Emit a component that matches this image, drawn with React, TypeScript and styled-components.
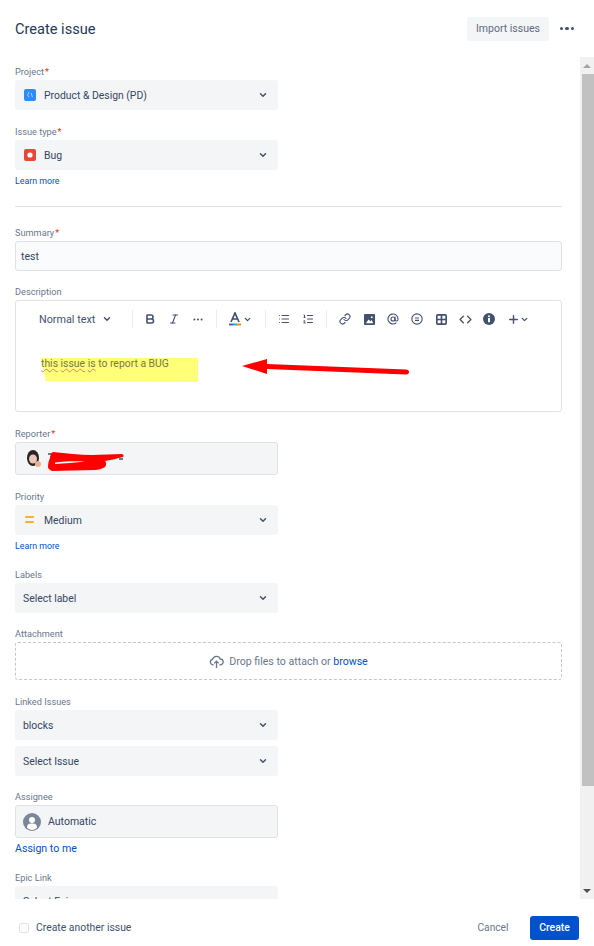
import React from 'react'
import styled, { createGlobalStyle } from 'styled-components'
import { AtSign, Bold, ChevronDown, Code, Italic, Link, List, ListOrdered, Plus } from 'lucide-react'

const Color = {
  text: '#344563',
  subtle: '#5e6c84',
  label: '#6b778c',
  field: '#f4f5f7',
  border: '#dfe1e6',
  link: '#0052cc',
  icon: '#42526e',
}

const GlobalStyle = createGlobalStyle`
  html, body {
    margin: 0;
    height: 100%;
    overflow: hidden;
    background: #fff;
  }
  body {
    font-family: Roboto, "Noto Sans", sans-serif;
    color: ${Color.text};
  }
  * {
    box-sizing: border-box;
  }
`

const PageContainer = styled.div`
  display: flex;
  flex-direction: column;
  width: 594px;
  height: 946px;
`

const Header = styled.header`
  flex: none;
  display: flex;
  align-items: center;
  justify-content: space-between;
  height: 57px;
  padding: 0 20px 0 15px;
`

const Title = styled.h1`
  margin: 0;
  font-size: 14.6px;
  font-weight: 400;
  color: #253858;
`

const HeaderActions = styled.div`
  display: flex;
  align-items: center;
  gap: 11px;
`

const ImportButton = styled.button`
  width: 82px;
  height: 24px;
  padding: 0;
  border: 0;
  border-radius: 2px;
  background: ${Color.field};
  color: ${Color.subtle};
  font: inherit;
  font-size: 10.5px;
`

const MoreDots = styled.span`
  display: flex;
  gap: 2px;
  width: 14px;

  i {
    width: 3.5px;
    height: 3.5px;
    border-radius: 50%;
    background: ${Color.icon};
  }
`

const Body = styled.div`
  flex: 1;
  min-height: 0;
  display: flex;
`

const ScrollArea = styled.main`
  flex: 1;
  min-width: 0;
  overflow: hidden;
  padding: 0 18px 0 15px;
`

const ScrollTrack = styled.div`
  flex: none;
  display: flex;
  flex-direction: column;
  width: 14px;
  background: #f1f1f1;
`

const ScrollButton = styled.span<{ $down?: boolean }>`
  flex: none;
  display: flex;
  align-items: center;
  justify-content: center;
  height: 17px;
  margin-top: ${({ $down }) => ($down ? 'auto' : '0')};

  &::before {
    content: '';
    border-left: 4px solid transparent;
    border-right: 4px solid transparent;
    border-${({ $down }) => ($down ? 'top' : 'bottom')}: 4px solid ${({ $down }) => ($down ? '#505050' : '#a3a3a3')};
  }
`

const ScrollThumb = styled.span`
  flex: none;
  height: 712px;
  margin-left: 2px;
  background: #c1c1c1;
`

const Form = styled.div`
  display: flex;
  flex-direction: column;
  width: 547px;
  padding-top: 8px;
`

const Field = styled.div<{ $top?: number }>`
  margin-top: ${({ $top }) => $top ?? 15}px;
`

const Label = styled.label`
  display: block;
  height: 15px;
  font-size: 9.2px;
  line-height: 14px;
  color: ${Color.label};

  b {
    margin-left: 1px;
    font-weight: 400;
    color: #de350b;
  }
`

const SelectBox = styled.div<{ $gap?: number }>`
  display: flex;
  align-items: center;
  width: 263px;
  height: 30px;
  margin-top: ${({ $gap }) => $gap ?? 0}px;
  padding: 0 10px 0 8px;
  border-radius: 3px;
  background: ${Color.field};
  font-size: 10.4px;
  color: ${Color.text};

  & > svg:last-child {
    margin-left: auto;
  }
`

const SelectIcon = styled.span`
  flex: none;
  display: flex;
  align-items: center;
  justify-content: center;
  width: 12px;
  height: 12px;
  margin: 0 8px 0 1px;
`

const ReadonlyBox = styled.div`
  display: flex;
  align-items: center;
  width: 263px;
  height: 33px;
  padding: 0 7px;
  border: 1px solid ${Color.border};
  border-radius: 3px;
  background: ${Color.field};
  font-size: 10.5px;
`

const HelpLink = styled.a`
  display: block;
  margin-top: 5px;
  font-size: 8.8px;
  line-height: 12px;
  color: ${Color.link};
`

const AssignLink = styled.a`
  display: block;
  margin-top: 4px;
  font-size: 10.6px;
  line-height: 13px;
  color: ${Color.link};
`

const Divider = styled.hr`
  height: 1px;
  margin: 19px 0 0;
  border: 0;
  background: ${Color.border};
`

const TextInput = styled.div`
  display: flex;
  align-items: center;
  height: 30px;
  padding: 0 5px;
  border: 1px solid ${Color.border};
  border-radius: 3px;
  background: #fafbfc;
  font-size: 10.5px;
`

const Editor = styled.div`
  position: relative;
  isolation: isolate;
  height: 112px;
  border: 1px solid ${Color.border};
  border-radius: 3px;
`

const Toolbar = styled.div`
  display: flex;
  align-items: center;
  height: 36px;
  padding-left: 23px;
  color: ${Color.icon};
`

const StyleMenu = styled.span`
  display: flex;
  align-items: center;
  width: 93px;
  font-size: 10.8px;
  gap: 7px;
`

const ToolSeparator = styled.span<{ $before?: number; $after?: number }>`
  flex: none;
  width: 1px;
  height: 18px;
  margin-left: ${({ $before }) => $before ?? 0}px;
  margin-right: ${({ $after }) => $after ?? 5}px;
  background: #ebecf0;
`

const Tool = styled.span<{ $width?: number }>`
  flex: none;
  display: flex;
  align-items: center;
  justify-content: center;
  width: ${({ $width }) => $width ?? 24}px;
  height: 24px;
  color: ${Color.icon};
`

const PlusChevron = styled(ChevronDown)`
  margin-left: -5px;
`

const EditorBody = styled.div`
  padding: 20px 25px 0;
  font-size: 10.4px;
  line-height: 13px;
  color: #77793f;

  u {
    text-decoration: underline wavy #e0805f 0.7px;
    text-underline-offset: 1px;
  }
`

const HighlightMark = styled.span`
  position: absolute;
  left: 25px;
  top: 57px;
  width: 157px;
  height: 24px;
  background: #ffff78;
  clip-path: polygon(0 0, 100% 0, 100% 100%, 3% 96%);
  z-index: -1;
`

const ArrowOverlay = styled.svg`
  position: absolute;
  left: 226px;
  top: 53px;
`

const AvatarSlot = styled.span`
  position: relative;
  display: flex;
  width: 16px;
  height: 18px;
  margin: 1px 7px 0 3px;
`

const ScribbleOverlay = styled.svg`
  position: absolute;
  left: 22px;
  top: 0;
`

const ReadonlyAvatar = styled.span`
  flex: none;
  width: 18px;
  height: 18px;
  margin: 0 7px 0 0;
  color: #7a869a;
`

const DropZone = styled.div`
  display: flex;
  align-items: center;
  justify-content: center;
  gap: 5px;
  height: 38px;
  border: 1px dashed #c1c7d0;
  border-radius: 3px;
  font-size: 10.6px;
  color: ${Color.label};

  a {
    color: ${Color.link};
  }
`

const Footer = styled.footer`
  flex: none;
  display: flex;
  align-items: center;
  height: 47px;
  padding: 10px 15px 0 19px;
`

const CheckBox = styled.span`
  width: 10px;
  height: 10px;
  margin-right: 7px;
  border: 1px solid ${Color.border};
  border-radius: 2px;
  background: #fafbfc;
`

const CheckLabel = styled.span`
  font-size: 10.4px;
  color: ${Color.icon};
`

const CancelButton = styled.button`
  margin-left: auto;
  width: 52px;
  height: 24px;
  padding: 0;
  border: 0;
  background: none;
  color: ${Color.label};
  font: inherit;
  font-size: 10.2px;
`

const CreateButton = styled.button`
  width: 49px;
  height: 24px;
  margin-left: 11px;
  padding: 0;
  border: 0;
  border-radius: 3px;
  background: ${Color.link};
  color: #fff;
  font: inherit;
  font-size: 10.4px;
  font-weight: 500;
`

const Chevron = () => <ChevronDown size={10} strokeWidth={3.5} color={Color.icon} />

const ToolIcon = { size: 12, strokeWidth: 2.2 }

const Required = () => <b>*</b>

const App = () => {
  return (
    <PageContainer>
      <GlobalStyle />
      <Header>
        <Title>Create issue</Title>
        <HeaderActions>
          <ImportButton>Import issues</ImportButton>
          <MoreDots>
            <i />
            <i />
            <i />
          </MoreDots>
        </HeaderActions>
      </Header>
      <Body>
        <ScrollArea>
          <Form>
            <Field $top={0}>
              <Label>
                Project
                <Required />
              </Label>
              <SelectBox>
                <SelectIcon>
                  <svg width="12" height="12" viewBox="0 0 12 12">
                    <rect width="12" height="12" rx="2" fill="#2c8cff" />
                    <path d="M5 3L3.5 6L5 8M7 4L8.5 8" stroke="#a9d0ff" strokeWidth="1" fill="none" />
                  </svg>
                </SelectIcon>
                Product &amp; Design (PD)
                <Chevron />
              </SelectBox>
            </Field>
            <Field>
              <Label>
                Issue type
                <Required />
              </Label>
              <SelectBox>
                <SelectIcon>
                  <svg width="12" height="12" viewBox="0 0 12 12">
                    <rect width="12" height="12" rx="2" fill="#e5493a" />
                    <circle cx="6" cy="6" r="2.6" fill="#fff" />
                  </svg>
                </SelectIcon>
                Bug
                <Chevron />
              </SelectBox>
              <HelpLink>Learn more</HelpLink>
            </Field>
            <Divider />
            <Field $top={19}>
              <Label>
                Summary
                <Required />
              </Label>
              <TextInput>test</TextInput>
            </Field>
            <Field $top={14}>
              <Label>Description</Label>
              <Editor>
                <Toolbar>
                  <StyleMenu>
                    Normal text
                    <ChevronDown size={10} strokeWidth={3.5} />
                  </StyleMenu>
                  <ToolSeparator />
                  <Tool><Bold size={12} strokeWidth={3.2} /></Tool>
                  <Tool><Italic {...ToolIcon} /></Tool>
                  <Tool>
                    <svg width="10" height="3" viewBox="0 0 10 3" fill="currentColor">
                      <circle cx="1.4" cy="1.5" r="1" />
                      <circle cx="5" cy="1.5" r="1" />
                      <circle cx="8.6" cy="1.5" r="1" />
                    </svg>
                  </Tool>
                  <ToolSeparator $before={6} $after={11} />
                  <Tool $width={14}>
                    <svg width="12" height="14" viewBox="0 0 12 14">
                      <path d="M2 10L6 1L10 10M3.5 7H8.5" stroke="#42526e" strokeWidth="1.7" fill="none" />
                      <rect y="11.5" width="4" height="2" fill="#6554c0" />
                      <rect x="4" y="11.5" width="4" height="2" fill="#00b8d9" />
                      <rect x="8" y="11.5" width="4" height="2" fill="#ff8b00" />
                    </svg>
                  </Tool>
                  <Tool $width={10}><ChevronDown size={9} strokeWidth={3.5} /></Tool>
                  <ToolSeparator $before={13} $after={6} />
                  <Tool><List size={12} strokeWidth={2} /></Tool>
                  <Tool><ListOrdered size={12} strokeWidth={2} /></Tool>
                  <ToolSeparator $before={6} $after={6} />
                  <Tool><Link {...ToolIcon} /></Tool>
                  <Tool>
                    <svg width="11" height="11" viewBox="0 0 12 12">
                      <rect width="12" height="12" rx="1" fill="#42526e" />
                      <path d="M2 10L5 6L7 8L8.5 6.5L10 10Z" fill="#fff" />
                      <circle cx="8.5" cy="3.5" r="1" fill="#fff" />
                    </svg>
                  </Tool>
                  <Tool><AtSign {...ToolIcon} /></Tool>
                  <Tool>
                    <svg width="12" height="12" viewBox="0 0 13 13" fill="none" stroke="currentColor" strokeWidth="1.2">
                      <circle cx="6.5" cy="6.5" r="5.6" />
                      <path d="M4.4 5.4H8.6M4.4 8H8.6" />
                    </svg>
                  </Tool>
                  <Tool>
                    <svg width="11" height="11" viewBox="0 0 12 12" fill="none" stroke="currentColor" strokeWidth="1.8">
                      <rect x="0.9" y="0.9" width="10.2" height="10.2" rx="1" />
                      <path d="M6 1V11M1 6H11" />
                    </svg>
                  </Tool>
                  <Tool><Code size={13} strokeWidth={2.4} /></Tool>
                  <Tool>
                    <svg width="12" height="12" viewBox="0 0 12 12">
                      <circle cx="6" cy="6" r="6" fill="#42526e" />
                      <circle cx="6" cy="3.2" r="1" fill="#fff" />
                      <rect x="5" y="5" width="2" height="4.2" fill="#fff" />
                    </svg>
                  </Tool>
                  <Tool><Plus size={13} strokeWidth={2.6} /></Tool>
                  <PlusChevron size={9} strokeWidth={3.5} />
                </Toolbar>
                <EditorBody>
                  <u>this</u> <u>issue</u> <u>is</u> to report a BUG
                </EditorBody>
                <HighlightMark />
                <ArrowOverlay width="170" height="24" viewBox="0 0 170 24">
                  <path d="M0 12L25 5L25 10L164 15.5C168 15.6 168 20.5 164 20.5L25 15L25 20Z" fill="#fe0000" />
                </ArrowOverlay>
              </Editor>
            </Field>
            <Field>
              <Label>
                Reporter
                <Required />
              </Label>
              <ReadonlyBox>
                <AvatarSlot>
                  <svg width="16" height="18" viewBox="0 0 16 18">
                    <ellipse cx="7" cy="8" rx="6" ry="8" fill="#2b2422" />
                    <ellipse cx="7" cy="9" rx="4" ry="4.5" fill="#eac6ba" />
                    <circle cx="12" cy="14" r="3" fill="#e8b28f" />
                  </svg>
                  <ScribbleOverlay width="76" height="21" viewBox="0 0 76 21">
                    <path d="M0 4H4M71 9H75" stroke="#42526e" strokeWidth="1.5" />
                    <path
                      d="M5 2C18 3 32 5 44 5C54 5 64 4 74 4C76 5 76 6 75 7C68 9 62 10 57 11C59 13 58 16 57 17C54 19 50 20 47 20C32 20 18 21 4 21C1 20 0 18 0 17C0 13 1 10 2 8C2 6 3 3 5 2Z"
                      fill="#fe0000"
                    />
                    <path d="M7 12.5C18 11 28 11 37 11.5C28 12.5 16 13.5 7 14Z" fill="#f4f5f7" />
                  </ScribbleOverlay>
                </AvatarSlot>
              </ReadonlyBox>
            </Field>
            <Field>
              <Label>Priority</Label>
              <SelectBox>
                <SelectIcon>
                  <svg width="10" height="8" viewBox="0 0 10 8" fill="#f7ae33">
                    <rect width="9" height="2" rx="1" />
                    <rect y="5" width="9" height="2" rx="1" />
                  </svg>
                </SelectIcon>
                Medium
                <Chevron />
              </SelectBox>
              <HelpLink>Learn more</HelpLink>
            </Field>
            <Field $top={16}>
              <Label>Labels</Label>
              <SelectBox>
                Select label
                <Chevron />
              </SelectBox>
            </Field>
            <Field $top={14}>
              <Label>Attachment</Label>
              <DropZone>
                <svg width="15" height="15" viewBox="0 0 16 16" fill="none" stroke="#6b778c" strokeWidth="1.4">
                  <path d="M5 11.5H4A3 3 0 0 1 3.8 5.6A4.3 4.3 0 0 1 12 5.3A3.1 3.1 0 0 1 12 11.5H11" />
                  <path d="M8 15V8M5.6 10L8 7.6L10.4 10" />
                </svg>
                <span>
                  Drop files to attach or <a>browse</a>
                </span>
              </DropZone>
            </Field>
            <Field>
              <Label>Linked Issues</Label>
              <SelectBox>
                blocks
                <Chevron />
              </SelectBox>
              <SelectBox $gap={6}>
                Select Issue
                <Chevron />
              </SelectBox>
            </Field>
            <Field $top={14}>
              <Label>Assignee</Label>
              <ReadonlyBox>
                <ReadonlyAvatar>
                  <svg width="18" height="18" viewBox="0 0 18 18">
                    <circle cx="9" cy="9" r="9" fill="currentColor" />
                    <circle cx="9" cy="7" r="3" fill="#fff" />
                    <path d="M4 15C4 11 6 10.5 9 10.5C12 10.5 14 11 14 15A8 8 0 0 1 4 15Z" fill="#fff" />
                  </svg>
                </ReadonlyAvatar>
                Automatic
              </ReadonlyBox>
              <AssignLink>Assign to me</AssignLink>
            </Field>
            <Field $top={16}>
              <Label>Epic Link</Label>
              <SelectBox>
                Select Epic
                <Chevron />
              </SelectBox>
            </Field>
          </Form>
        </ScrollArea>
        <ScrollTrack>
          <ScrollButton />
          <ScrollThumb />
          <ScrollButton $down />
        </ScrollTrack>
      </Body>
      <Footer>
        <CheckBox />
        <CheckLabel>Create another issue</CheckLabel>
        <CancelButton>Cancel</CancelButton>
        <CreateButton>Create</CreateButton>
      </Footer>
    </PageContainer>
  )
}

export default App
